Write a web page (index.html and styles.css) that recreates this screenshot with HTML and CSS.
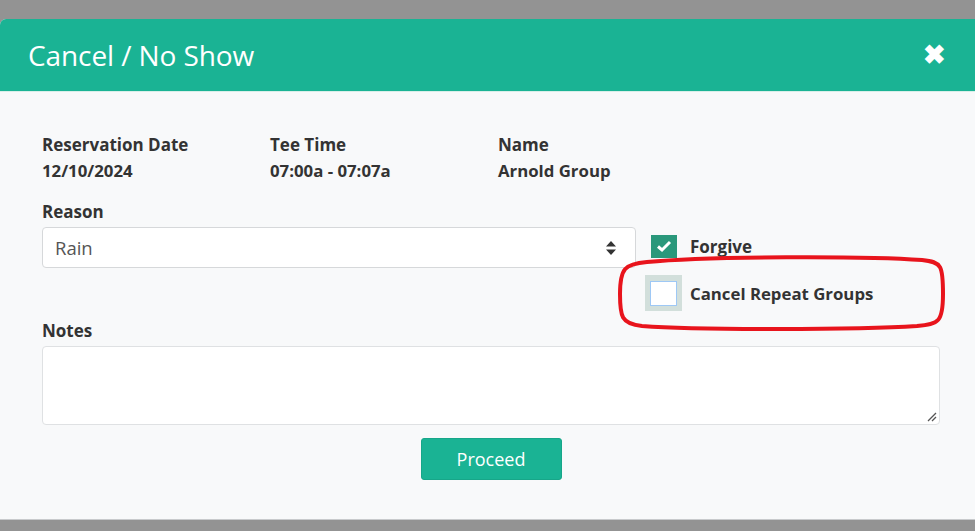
FILE: index.html
```html
<!DOCTYPE html>
<html>
<head>
<meta charset="utf-8">
<link rel="stylesheet" href="styles.css">
</head>
<body>
<div class="modal">
  <div class="modal-header">
    <h1 class="title">Cancel / No Show</h1>
    <span class="close">&#10006;</span>
  </div>
  <div class="modal-body">
    <div class="info-row">
      <div class="info-col c1">
        <div class="label">Reservation Date</div>
        <div class="value">12/10/2024</div>
      </div>
      <div class="info-col c2">
        <div class="label">Tee Time</div>
        <div class="value">07:00a - 07:07a</div>
      </div>
      <div class="info-col">
        <div class="label">Name</div>
        <div class="value">Arnold Group</div>
      </div>
    </div>
    <div class="label reason-label">Reason</div>
    <div class="reason-row">
      <div class="select">
        <span>Rain</span>
        <svg class="arrows" width="10" height="16" viewBox="0 0 10 16"><path d="M5 1 L10 6.5 H0 Z M0 9.5 H10 L5 15 Z" fill="#333"/></svg>
      </div>
      <div class="checks">
        <div class="check-row">
          <span class="cb checked"><svg width="16" height="14" viewBox="0 0 16 14"><path d="M2 7.5 L6 11 L14 3" fill="none" stroke="#fff" stroke-width="3"/></svg></span>
          <span class="cb-label">Forgive</span>
        </div>
        <div class="check-row second">
          <span class="cb-wrap"><span class="cb empty"></span></span>
          <span class="cb-label">Cancel Repeat Groups</span>
        </div>
        <svg class="ring" width="330" height="78" viewBox="0 0 330 78"><path d="M30 8 C 90 2, 250 2, 305 6 C 325 8, 326 12, 326 40 C 326 68, 322 70, 300 72 C 240 76, 80 76, 25 72 C 4 70, 3 62, 3 40 C 3 14, 8 10, 30 8 Z" fill="none" stroke="#e8141c" stroke-width="4"/></svg>
      </div>
    </div>
    <div class="label notes-label">Notes</div>
    <div class="textarea">
      <svg class="grip" width="10" height="10" viewBox="0 0 10 10"><path d="M1 9 L9 1 M5 9 L9 5" stroke="#555" stroke-width="1.3"/></svg>
    </div>
    <div class="actions">
      <button class="btn">Proceed</button>
    </div>
  </div>
</div>
</body>
</html>
```

FILE: styles.css
```css
html, body {
  margin: 0;
  padding: 0;
}
body {
  background: #939393;
  width: 975px;
  height: 531px;
  overflow: hidden;
  font-family: "Open Sans", "Noto Sans", sans-serif;
  padding-top: 19px;
  box-sizing: border-box;
}
.modal {
  width: 990px;
  height: 501px;
  background: #f8f9fa;
  border-radius: 6px 6px 0 0;
  overflow: hidden;
  border-bottom: 1px solid #c8cacc;
  box-sizing: border-box;
}
.modal-header {
  background: #1ab394;
  height: 72px;
  border-bottom: 1px solid #d9efe9;
  display: flex;
  align-items: center;
  justify-content: space-between;
  padding: 0 44px 0 28px;
}
.title {
  margin: 0;
  color: #fff;
  font-weight: 400;
  font-size: 28px;
  letter-spacing: -0.1px;
}
.close {
  color: #fff;
  font-size: 27px;
  font-weight: 700;
  line-height: 1;
  margin-top: -4px;
}
.modal-body {
  padding: 40px 0 0 42px;
  width: 898px;
  color: #333;
}
.label {
  font-weight: 700;
  font-size: 17px;
  color: #333;
  line-height: 26px;
}
.value {
  font-weight: 700;
  font-size: 16.8px;
  color: #333;
  line-height: 26px;
}
.info-row {
  display: flex;
}
.info-col.c1, .info-col.c2 {
  width: 228px;
}
.reason-label {
  margin-top: 15px;
}
.reason-row {
  display: flex;
  margin-top: 2px;
}
.select {
  width: 594px;
  height: 41px;
  box-sizing: border-box;
  background: #fff;
  border: 1px solid #d6d8da;
  border-radius: 4px;
  display: flex;
  align-items: center;
  justify-content: space-between;
  padding: 0 19px 0 12px;
  font-size: 18.5px;
  color: #555;
}
.arrows {
  margin-top: 1px;
}
.checks {
  position: relative;
  margin-left: 15px;
}
.check-row {
  display: flex;
  align-items: center;
  height: 26px;
  margin-top: 6px;
}
.check-row.second {
  margin-top: 16px;
  margin-left: -6px;
  height: 36px;
}
.cb {
  width: 26px;
  height: 23px;
  box-sizing: border-box;
  display: flex;
  align-items: center;
  justify-content: center;
}
.cb.checked {
  background: #2a987b;
}
.cb-wrap {
  width: 37px;
  height: 36px;
  background: #d2dfdb;
  display: flex;
  align-items: center;
  justify-content: center;
}
.cb.empty {
  width: 27px;
  height: 25px;
  background: #fff;
  border: 1px solid #9ec8f5;
}
.cb-label {
  font-weight: 700;
  font-size: 17px;
  color: #333;
  margin-left: 13px;
}
.check-row.second .cb-label {
  margin-left: 8px;
  font-size: 16.8px;
}
.ring {
  position: absolute;
  left: -34px;
  top: 27px;
}
.notes-label {
  margin-top: 7px;
}
.textarea {
  margin-top: 2px;
  width: 898px;
  height: 79px;
  box-sizing: border-box;
  background: #fff;
  border: 1px solid #dfe1e3;
  border-radius: 4px;
  position: relative;
}
.grip {
  position: absolute;
  right: 2px;
  bottom: 2px;
}
.actions {
  display: flex;
  justify-content: center;
  margin-top: 13px;
}
.btn {
  width: 141px;
  height: 42px;
  background: #1ab394;
  border: 1px solid #17a689;
  border-radius: 3px;
  color: #fff;
  font-family: "Open Sans", sans-serif;
  font-size: 18px;
  margin-left: 0;
}
```
